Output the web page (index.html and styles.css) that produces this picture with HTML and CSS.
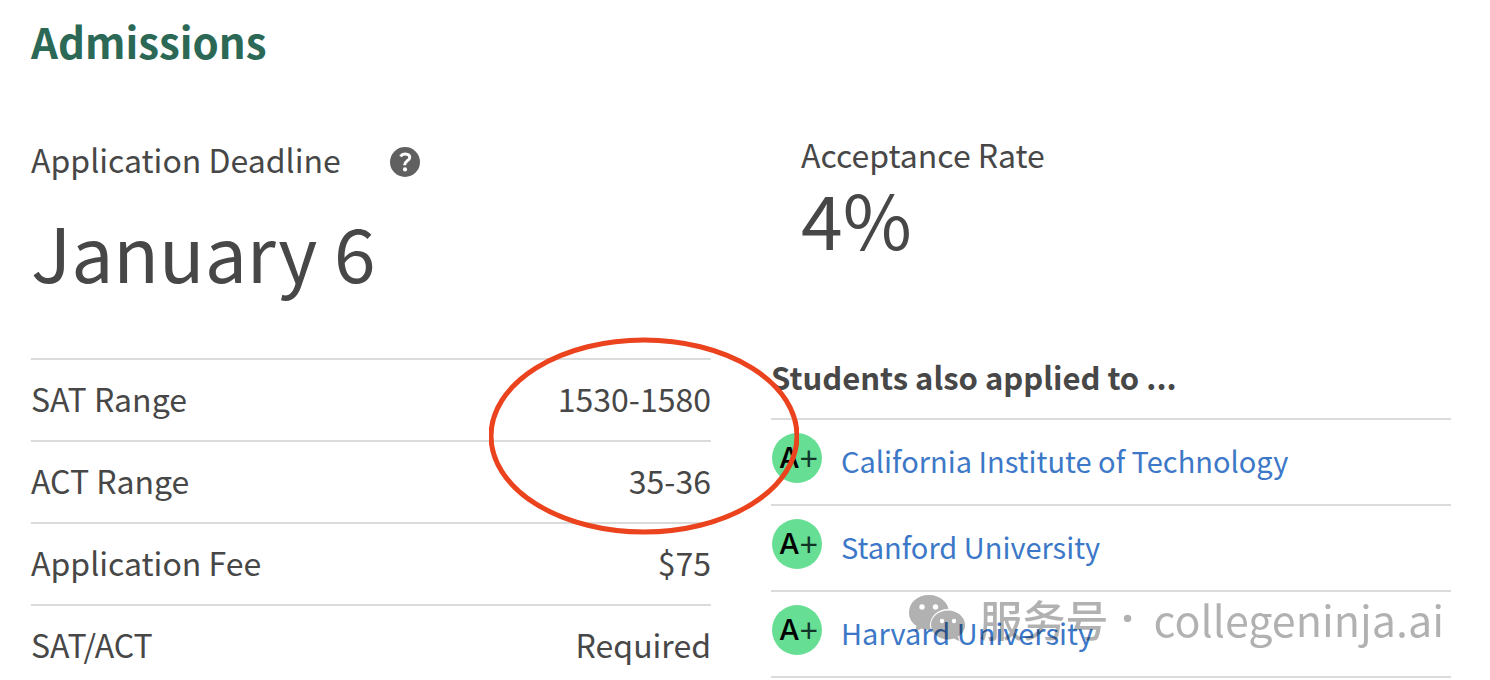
FILE: index.html
```html
<!DOCTYPE html>
<html lang="en">
<head>
<meta charset="utf-8">
<title>Admissions</title>
<link rel="stylesheet" href="styles.css">
</head>
<body>
<main class="admissions">
  <h2 class="title">Admissions</h2>
  <div class="columns">
    <section class="column">
      <div class="stat stat-deadline">
        <div class="stat-label">Application Deadline
          <button class="help" type="button" aria-label="About the application deadline">
            <svg viewBox="0 0 30 30" width="30" height="30" aria-hidden="true">
              <circle cx="15" cy="15" r="15" fill="#606060"/>
              <path d="M10.500 9.400C11.700 7.700 13.300 6.900 15.100 7c2.700.1 4.600 1.400 4.600 3.400 0 3.300-5.100 3.400-5.100 7.800" fill="none" stroke="#fff" stroke-width="3"/>
              <circle cx="15" cy="22.400" r="2.100" fill="#fff"/>
            </svg>
          </button>
        </div>
        <div class="stat-value">January 6</div>
      </div>
      <table class="facts">
        <tbody>
          <tr><th scope="row">SAT Range</th><td>1530-1580</td></tr>
          <tr><th scope="row">ACT Range</th><td>35-36</td></tr>
          <tr><th scope="row">Application Fee</th><td>$75</td></tr>
          <tr><th scope="row">SAT/ACT</th><td>Required</td></tr>
        </tbody>
      </table>
    </section>
    <section class="column">
      <div class="stat stat-rate">
        <div class="stat-label">Acceptance Rate</div>
        <div class="stat-value">4%</div>
      </div>
      <h3 class="subtitle">Students also applied to ...</h3>
      <ul class="schools">
        <li><span class="grade">A<span class="plus">+</span></span><a href="#caltech">California Institute of Technology</a></li>
        <li><span class="grade">A<span class="plus">+</span></span><a href="#stanford">Stanford University</a></li>
        <li><span class="grade">A<span class="plus">+</span></span><a href="#harvard">Harvard University</a></li>
      </ul>
    </section>
  </div>
  <svg class="marker" viewBox="0 0 310 198" width="310" height="198" aria-hidden="true">
    <ellipse cx="155" cy="99" rx="153" ry="96" fill="none" stroke="#ea431e" stroke-width="5"/>
  </svg>
  <div class="watermark">
    <svg viewBox="0 0 58 48" width="58" height="48" aria-hidden="true">
      <mask id="back">
        <rect width="58" height="48" fill="#fff"/>
        <ellipse cx="40" cy="31" rx="18" ry="16" fill="#000"/>
        <circle cx="14" cy="13" r="2.700" fill="#000"/>
        <circle cx="27.500" cy="13" r="2.700" fill="#000"/>
      </mask>
      <mask id="front">
        <rect width="58" height="48" fill="#fff"/>
        <circle cx="34" cy="27" r="2.200" fill="#000"/>
        <circle cx="46" cy="27" r="2.200" fill="#000"/>
      </mask>
      <path mask="url(#back)" d="M21 1C9.500 1 1 8.500 1 18.500c0 6 3 10.500 7.500 13.500L6.500 38l7-3.500c2.500.8 5 1.200 7.500 1.200 11 0 20-7.700 20-17.200S32.500 1 21 1z"/>
      <path mask="url(#front)" d="M40 16.500C30.500 16.500 23 23 23 31s7.500 14.500 17 14.500c2 0 4-.3 6-.9l5.500 2.700-1.500-4.800c4.500-2.700 7-6.800 7-11.500 0-8-7.500-14.500-17-14.500z"/>
    </svg>
    <span class="account">服务号</span><span class="dot">·</span><span>collegeninja.ai</span>
  </div>
</main>
</body>
</html>
```

FILE: styles.css
```css
* {
  box-sizing: border-box;
}

body {
  margin: 0;
  background: #fff;
  color: #474747;
  font-family: "Noto Sans CJK SC", "Noto Sans", sans-serif;
  font-size: 32px;
  line-height: 40px;
}

.admissions {
  position: relative;
  padding: 9px 39px 0 31px;
}

.title {
  margin: 0;
  color: #2b6956;
  font-size: 42px;
  line-height: 64px;
}

.columns {
  display: grid;
  grid-template-columns: 1fr 1fr;
  gap: 60px;
}

.stat-deadline {
  padding-top: 66px;
}

.stat-deadline .stat-label {
  margin-bottom: 28px;
}

.stat-rate {
  padding: 61px 0 0 30px;
}

.stat-label {
  display: flex;
  align-items: center;
  gap: 49px;
}

.stat-value {
  font-size: 75px;
  line-height: 88px;
}

.help {
  display: flex;
  margin-top: 6px;
  padding: 0;
  border: 0;
  border-radius: 50%;
  background: none;
  cursor: pointer;
}

.facts {
  width: 100%;
  margin-top: 63px;
  border-spacing: 0;
}

.facts th,
.facts td {
  padding: 14px 0 18px;
  border-top: 2px solid #dbdbdb;
  font-weight: 400;
  line-height: 48px;
  text-align: left;
}

.facts td {
  text-align: right;
}

.facts tr:last-child > * {
  padding-bottom: 0;
}

.subtitle {
  margin: 95px 0 21px;
  font-size: 31px;
}

.schools {
  margin: 0;
  padding: 0;
  border-bottom: 2px solid #dbdbdb;
  list-style: none;
}

.schools li {
  display: flex;
  gap: 19px;
  height: 86px;
  padding: 13px 0 0 1px;
  border-top: 2px solid #dbdbdb;
}

.schools a {
  padding-top: 7px;
  color: #3c78c7;
  font-size: 29px;
  text-decoration: none;
}

.grade {
  display: flex;
  align-items: center;
  justify-content: center;
  width: 50px;
  height: 50px;
  padding-left: 3px;
  border-radius: 50%;
  background: #66de93;
  color: #000;
  font: 500 29px/48px Inter, sans-serif;
}

.plus {
  color: #12352a;
  font-family: Lato, sans-serif;
  font-size: 32px;
  font-weight: 400;
}

.marker {
  position: absolute;
  top: 337px;
  left: 489px;
}

.watermark {
  position: absolute;
  top: 590px;
  right: 46px;
  display: flex;
  align-items: center;
  gap: 13px;
  color: #000;
  font-size: 43px;
  line-height: 56px;
  opacity: 0.3;
  pointer-events: none;
}

.account {
  font-weight: 500;
}

.dot {
  margin-right: 7px;
  font-family: "Noto Sans", sans-serif;
  font-weight: 700;
}
```
